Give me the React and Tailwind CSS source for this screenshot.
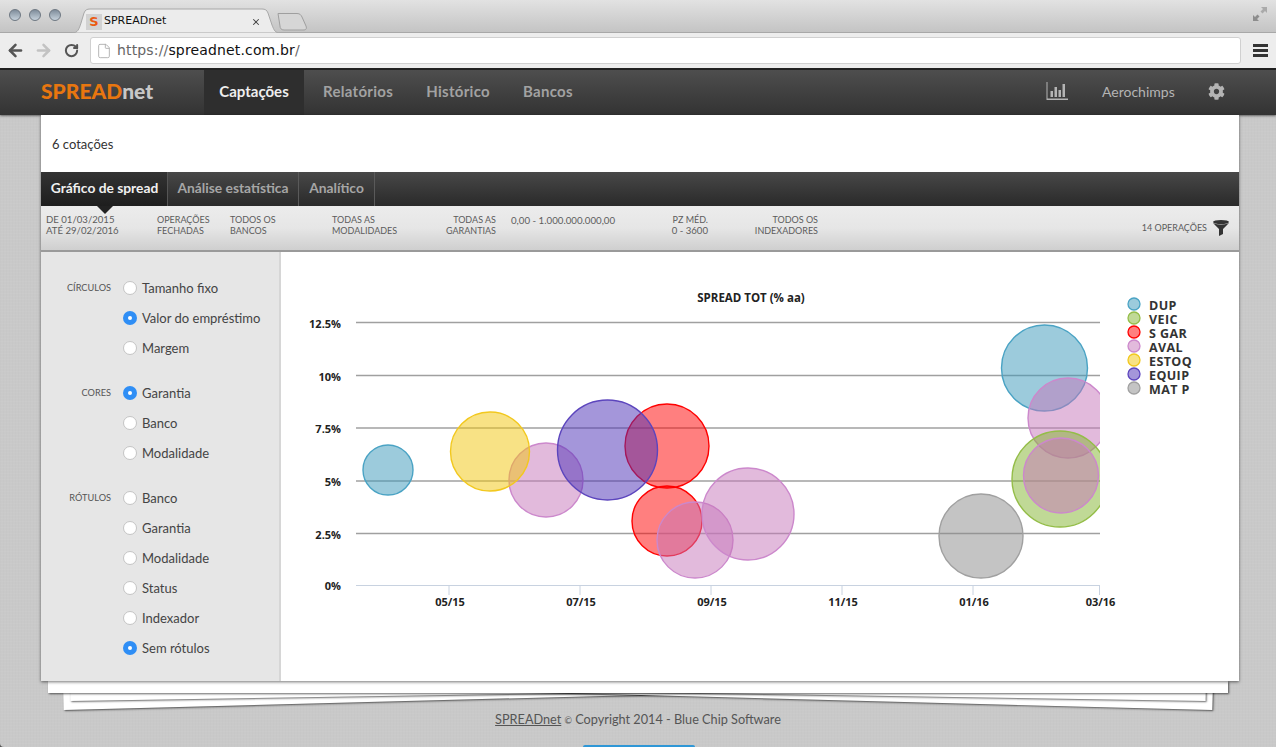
import React from 'react';
import { FaCog } from 'react-icons/fa';
import { File, RotateCw, ArrowLeft, ArrowRight, X } from 'lucide-react';

const navItems = ['Relatórios', 'Histórico', 'Bancos'];

const radioGroups = [
  { label: 'CÍRCULOS', options: [['Tamanho fixo'], ['Valor do empréstimo', true], ['Margem']] },
  { label: 'CORES', options: [['Garantia', true], ['Banco'], ['Modalidade']] },
  { label: 'RÓTULOS', options: [['Banco'], ['Garantia'], ['Modalidade'], ['Status'], ['Indexador'], ['Sem rótulos', true]] },
];

// stroke, then fill (drawn at half opacity so overlaps darken like the chart)
const colors = {
  dup: ['#4aa3c4', '#3a97ba'],
  veic: ['#94bd48', '#82b32e'],
  red: ['#ff0000', '#ff0000'],
  aval: ['#cc88cc', '#c576ba'],
  estoq: ['#f2c81e', '#f1c60c'],
  equip: ['#5c45bd', '#4a2eb5'],
  mat: ['#a0a0a0', '#8a8a8a'],
};

// paint order matters, it sets the colour of the overlaps
const bubbles = [
  [388, 470, 25, 'dup'],
  [546, 480, 37, 'aval'],
  [490, 451.5, 39.5, 'estoq'],
  [667, 446, 42, 'red'],
  [607.5, 450, 50, 'equip'],
  [667, 521, 35, 'red'],
  [695, 540, 38, 'aval'],
  [748, 514, 46, 'aval'],
  [981, 536, 42, 'mat'],
  [1044.5, 368, 43, 'dup'],
  [1068, 418, 40, 'aval'],
  [1060, 479, 48, 'veic'],
  [1061, 475.5, 37.5, 'aval'],
];

const legend = [
  ['DUP', 'dup'],
  ['VEIC', 'veic'],
  ['S GAR', 'red'],
  ['AVAL', 'aval'],
  ['ESTOQ', 'estoq'],
  ['EQUIP', 'equip'],
  ['MAT P', 'mat'],
];

const yAxis = [['12.5%', 322.5], ['10%', 375.5], ['7.5%', 428], ['5%', 481], ['2.5%', 533.5]];
const xAxis = [['05/15', 449], ['07/15', 580], ['09/15', 711], ['11/15', 842], ['01/16', 973], ['03/16', 1099.5]];

const linen = "bg-[repeating-linear-gradient(0deg,rgba(255,255,255,0.03)_0px,rgba(255,255,255,0.03)_1px,transparent_1px,transparent_3px),repeating-linear-gradient(90deg,rgba(0,0,0,0.012)_0px,rgba(0,0,0,0.012)_1px,transparent_1px,transparent_3px)]";

function Radio({ checked }) {
  if (checked) {
    return (
      <span className="flex w-[14px] h-[14px] items-center justify-center rounded-full bg-[#2f8ef5]">
        <span className="w-[4px] h-[4px] rounded-full bg-white" />
      </span>
    );
  }
  return <span className="block w-[14px] h-[14px] rounded-full bg-white border border-[#c4c4c4]" />;
}

function BrowserChrome() {
  return (
    <div className="h-[70px] border-b-2 border-[#222]">
      <div className="relative h-[33px] flex items-end bg-gradient-to-b from-[#e2e2e2] to-[#c4c4c4] border-b border-[#a8a8a8]">
        <div className="absolute left-[9px] top-[9px] flex gap-[8px]">
          {[0, 1, 2].map(i => (
            <span key={i} className="w-[12px] h-[12px] rounded-full bg-gradient-to-b from-[#7f8d9b] to-[#c6d2dc] border border-[#6d7782]" />
          ))}
        </div>
        <div className="relative ml-[72px] w-[208px] h-[25px] -mb-px flex items-center pl-[14px] pr-[19px] pt-[2px]">
          <svg className="absolute inset-0" width="208" height="25" viewBox="0 0 208 25">
            <path d="M0 25 C6 25 7 21 9 15 L12 5 C13 2 15 1 18 1 L190 1 C193 1 195 2 196 5 L200 17 C202 22 203 25 208 25 Z" fill="#ececec" stroke="#a8a8a8" />
          </svg>
          <span className="relative flex items-center justify-center w-[16px] h-[16px] bg-[#d2d2d2] text-[#ea5a12] text-[13px] font-bold font-['DejaVu_Sans',sans-serif]">S</span>
          <span className="relative ml-[2px] text-[11px] text-[#111] font-['DejaVu_Sans',sans-serif]">SPREADnet</span>
          <X className="relative ml-auto text-[#444]" size={10} strokeWidth={2.5} />
        </div>
        <svg className="-mb-px -ml-[5px] self-center mt-[10px]" width="34" height="20" viewBox="0 0 34 20">
          <path d="M3 1.5 L22 1.5 C25 1.5 26 3 27 5 L31 14 C32 17 31 18 28 18 L9 18 C6 18 5 16 5 14 Z" fill="#d6d6d6" stroke="#9f9f9f" />
        </svg>
        <svg className="absolute right-[8px] top-[6px]" width="16" height="16" viewBox="0 0 16 16" fill="#8d8d8d">
          <path d="M9 1 H15 V7 L13 5 L10.5 7.5 L8.5 5.5 L11 3 Z" fill="#aaaaaa" />
          <path d="M1 15 V9 L3 11 L5.5 8.5 L7.5 10.5 L5 13 L7 15 Z" />
        </svg>
      </div>
      <div className="h-[35px] flex items-center bg-[#ededed]">
        <ArrowLeft className="ml-[6px] text-[#555]" size={19} strokeWidth={3.2} />
        <ArrowRight className="ml-[9px] text-[#c2c2c2]" size={19} strokeWidth={3.2} />
        <RotateCw className="ml-[11px] text-[#555]" size={15} strokeWidth={3.2} />
        <div className="ml-[11px] w-[1151px] h-[27px] flex items-center bg-white border border-[#d0d0d0] rounded-[3px]">
          <File className="ml-[5px] text-[#aaa]" size={16} strokeWidth={1.3} />
          <span className="ml-[5px] text-[14px] tracking-[0.15px] text-[#666] font-['DejaVu_Sans',sans-serif]">
            https:/<span className="text-[#666]">/</span><span className="text-[#111]">spreadnet.com.br</span>/
          </span>
        </div>
        <div className="ml-[12px] flex flex-col gap-[2px]">
          <span className="w-[15px] h-[3px] bg-[#333]" />
          <span className="w-[15px] h-[3px] bg-[#333]" />
          <span className="w-[15px] h-[3px] bg-[#333]" />
        </div>
      </div>
    </div>
  );
}

function NavBar() {
  return (
    <div className="relative z-10 h-[45px] pb-[3px] flex items-stretch bg-gradient-to-b from-[#4e4e4e] to-[#333] shadow-[0_1px_2px_rgba(0,0,0,0.5)]">
      <div className="ml-[41px] w-[163px] flex items-center text-[21px] font-black">
        <span className="text-[#e8760f]">SPREAD</span><span className="text-[#c8c8c8]">net</span>
      </div>
      <div className="-mb-[3px] pb-[3px] w-[100px] flex items-center justify-center bg-[#2e2e2e] text-[15px] font-bold text-[#eeeeee]">Captações</div>
      <div className="flex items-center gap-[33px] ml-[19px] text-[15px] tracking-[0.3px] font-bold text-[#a2a2a2]">
        {navItems.map(item => <span key={item}>{item}</span>)}
      </div>
      <div className="ml-auto flex items-center pr-[51px] text-[#b4b4b4]">
        <svg width="22" height="18" viewBox="0 0 22 18" fill="currentColor">
          <path d="M0.5 0 H1.5 V16.5 H22 V18 H0.5 Z" />
          <rect x="4.5" y="9" width="2.5" height="6" />
          <rect x="8.5" y="5" width="2.5" height="10" />
          <rect x="12.5" y="8" width="2.5" height="7" />
          <rect x="16.5" y="2" width="2.5" height="13" />
        </svg>
        <span className="ml-[34px] text-[14px] w-[73px] whitespace-nowrap">Aerochimps</span>
        <FaCog className="ml-[33px]" size={17} />
      </div>
    </div>
  );
}

function Tabs() {
  return (
    <div className="relative h-[34px] pb-[1px] flex bg-gradient-to-b from-[#484848] to-[#2a2a2a] text-[13.8px] font-bold">
      <div className="w-[127px] -mb-[1px] pb-[1px] pl-[1px] flex items-center justify-center bg-gradient-to-b from-[#333] to-[#1e1e1e] border-r border-[#555] text-[#f0f0f0]">Gráfico de spread</div>
      <div className="w-[131px] -mb-[1px] pb-[1px] flex items-center justify-center border-r border-[#5a5a5a] text-[#a6a6a6]">Análise estatística</div>
      <div className="w-[76px] -mb-[1px] pb-[1px] flex items-center justify-center border-r border-[#5a5a5a] text-[#a6a6a6]">Analítico</div>
      <span className="absolute left-[56px] top-[34px] z-10 w-0 h-0 border-x-[8px] border-x-transparent border-t-[8px] border-t-[#222]" />
    </div>
  );
}

function FilterBar() {
  return (
    <div className="h-[46px] flex items-start pt-[9px] bg-gradient-to-b from-[#ececec] via-[#e6e6e6] to-[#cfcfcf] border-b-2 border-[#9a9a9a] text-[9px] leading-[10.5px] text-[#5c5c5c]">
      <div className="ml-[5px] w-[111px] text-[9.6px]">DE 01/03/2015<br />ATÉ 29/02/2016</div>
      <div className="w-[73px]">OPERAÇÕES<br />FECHADAS</div>
      <div className="w-[102px]">TODOS OS<br />BANCOS</div>
      <div className="w-[70px]">TODAS AS<br />MODALIDADES</div>
      <div className="w-[94px] text-right">TODAS AS<br />GARANTIAS</div>
      <div className="ml-[15px] w-[105px] whitespace-nowrap text-[9.7px]">0,00 - 1.000.000.000,00</div>
      <div className="w-[92px] text-right">PZ MÉD.<br /><span className="text-[9.6px]">0 - 3600</span></div>
      <div className="w-[110px] text-right">TODOS OS<br />INDEXADORES</div>
      <div className="ml-auto self-center -mt-[9px] flex items-center pr-[10px]">
        <span>14 OPERAÇÕES</span>
        <svg className="ml-[6px]" width="16" height="16" viewBox="0 0 16 16" fill="#333">
          <ellipse cx="8" cy="2" rx="8" ry="2" />
          <path d="M0 3 L6 9 V16 L10 14 V9 L16 3 Q8 6 0 3 Z" />
        </svg>
      </div>
    </div>
  );
}

function Sidebar() {
  return (
    <div className="w-[240px] shrink-0 pt-[21px] flex flex-col gap-[15px] bg-[#e6e6e6] border-r-2 border-[#d6d6d6]">
      {radioGroups.map(group => (
        <div key={group.label} className="flex">
          <div className="w-[70px] h-[30px] flex items-center justify-end text-[9.2px] text-[#555]">{group.label}</div>
          <div className="ml-[12px] flex flex-col">
            {group.options.map(([name, checked]) => (
              <div key={name} className="h-[30px] flex items-center gap-[5px] text-[13px] text-[#444]">
                <Radio checked={checked} />
                <span className="pt-[2px]">{name}</span>
              </div>
            ))}
          </div>
        </div>
      ))}
    </div>
  );
}

function Chart() {
  return (
    <div className="flex-1 bg-white">
      <svg width="958" height="429" viewBox="281 252 958 429" className="block font-['Open_Sans',sans-serif]">
        <defs>
          <clipPath id="plot"><rect x="300" y="300" width="800" height="290" /></clipPath>
        </defs>
        <text x="751" y="302" textAnchor="middle" fontSize="11.5" fontWeight="700" fill="#222">SPREAD TOT (% aa)</text>
        {yAxis.map(([label, y]) => (
          <g key={label}>
            <line x1="356" x2="1100" y1={y} y2={y} stroke="#a0a0a0" strokeWidth="1.4" />
            <text x="341" y={y + 5} textAnchor="end" fontSize="11" fontWeight="700" fill="#222">{label}</text>
          </g>
        ))}
        <line x1="356" x2="1100" y1="585.5" y2="585.5" stroke="#c8d2e0" strokeWidth="1.2" />
        <text x="341" y="590" textAnchor="end" fontSize="11" fontWeight="700" fill="#222">0%</text>
        {xAxis.map(([label, x]) => (
          <g key={label}>
            <line x1={x} x2={x} y1="586" y2="595" stroke="#c8d2e0" />
            <text x={x + 1} y="606" textAnchor="middle" fontSize="11" fontWeight="700" fill="#222">{label}</text>
          </g>
        ))}
        <g clipPath="url(#plot)">
          {bubbles.map(([cx, cy, r, c], i) => (
            <circle key={i} cx={cx} cy={cy} r={r} fill={colors[c][1]} fillOpacity="0.5" stroke={colors[c][0]} strokeWidth="1.4" />
          ))}
        </g>
        {legend.map(([label, c], i) => (
          <g key={label}>
            <circle cx="1134" cy={304 + i * 14} r="6" fill={colors[c][1]} fillOpacity="0.5" stroke={colors[c][0]} strokeWidth="1.3" />
            <text x="1149" y={309.5 + i * 14} fontSize="12.5" fontWeight="700" letterSpacing="0.4" fill="#333">{label}</text>
          </g>
        ))}
      </svg>
    </div>
  );
}

export default function App() {
  return (
    <div className="bg-[#555]">
      <div className={`relative h-[747px] w-[1276px] overflow-hidden rounded-bl-[4px] bg-[#c9c9c9] font-['Lato',sans-serif] ${linen}`}>
        <BrowserChrome />
        <NavBar />
        <div className="relative ml-[41px] mr-[37px]">
          <div className="absolute left-[22px] right-[26px] -bottom-[2px] h-[40px] -rotate-[1.5deg] bg-white shadow-[1px_1px_2px_rgba(0,0,0,0.6)]" />
          <div className="absolute left-[22px] right-[26px] -bottom-[2px] h-[40px] rotate-[1.5deg] bg-white shadow-[1px_1px_2px_rgba(0,0,0,0.6)]" />
          <div className="absolute left-[29px] right-[33px] bottom-[1px] h-[40px] -rotate-[0.9deg] bg-white shadow-[1px_1px_2px_rgba(0,0,0,0.6)]" />
          <div className="absolute left-[29px] right-[33px] bottom-[1px] h-[40px] rotate-[0.9deg] bg-white shadow-[1px_1px_2px_rgba(0,0,0,0.6)]" />
          <div className="relative z-10 bg-white shadow-[0_1px_3px_rgba(0,0,0,0.55)]">
            <div className="h-[57px] flex items-center pl-[11px] pt-[2px] text-[13px] text-[#333]">6 cotações</div>
            <Tabs />
            <FilterBar />
            <div className="h-[429px] flex">
              <Sidebar />
              <Chart />
            </div>
          </div>
          <div className="relative ml-[7px] mr-[11px] h-[12px] bg-white shadow-[1px_1px_2px_rgba(0,0,0,0.6)]" />
        </div>
        <div className="mt-[17px] text-center text-[12.7px] text-[#555]">
          <span className="underline">SPREADnet</span> <span className="text-[9px]">©</span> Copyright 2014 - Blue Chip Software
        </div>
        <div className="absolute left-[583px] bottom-0 w-[112px] h-[2px] rounded-t-[3px] bg-[#2f97d6]" />
      </div>
    </div>
  );
}
